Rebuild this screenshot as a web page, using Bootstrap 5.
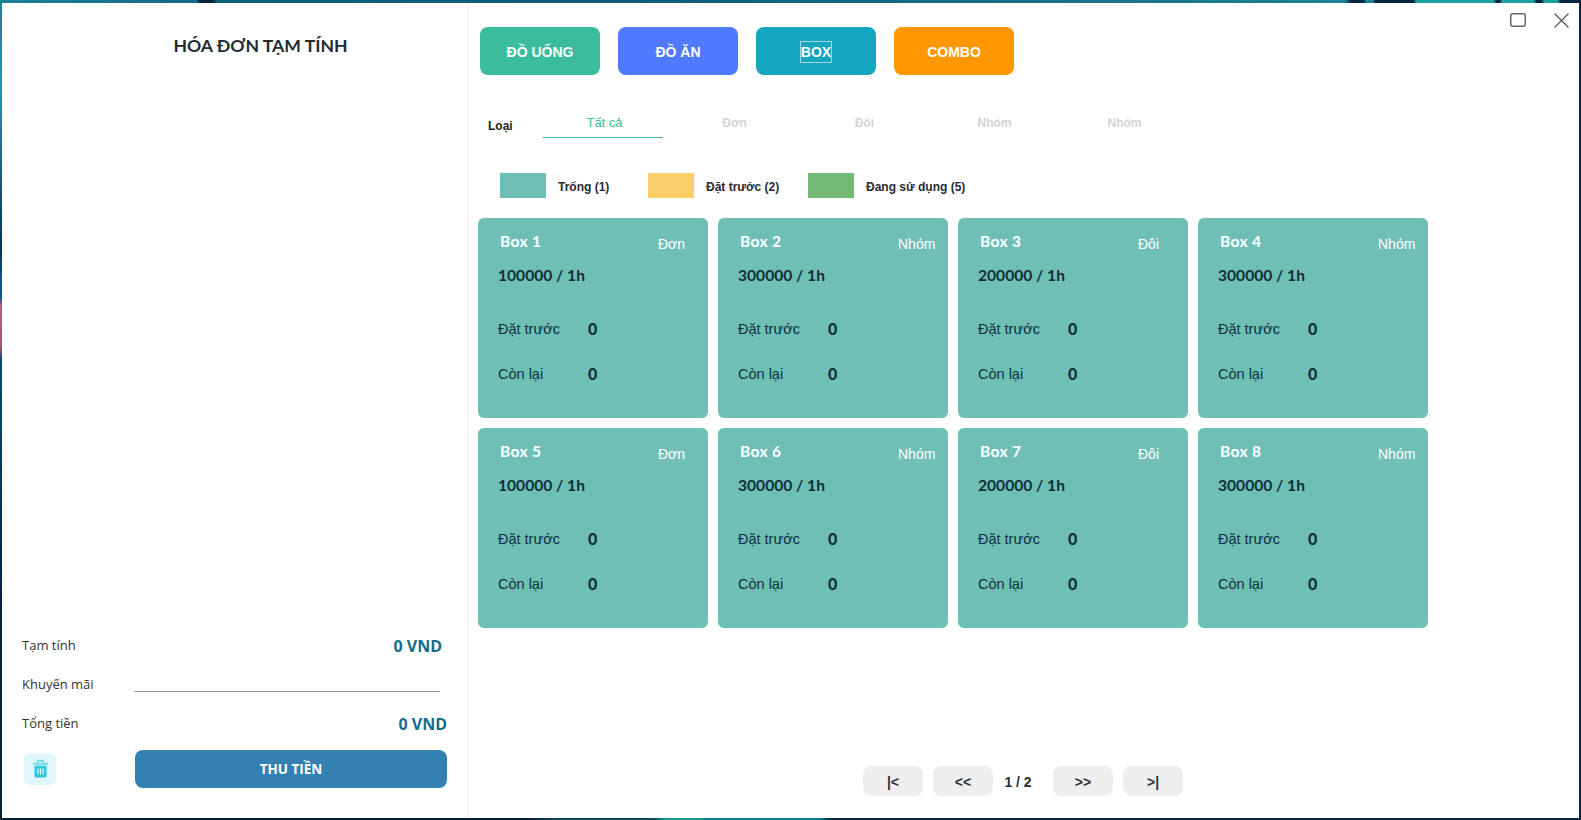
<!DOCTYPE html>
<html lang="vi">
<head>
  <meta charset="UTF-8" />
  <title>Hóa đơn tạm tính</title>
  <link href="https://cdn.jsdelivr.net/npm/bootstrap@5.3.0/dist/css/bootstrap.min.css" rel="stylesheet">
  <style>
    html, body { height: 100%; overflow: hidden; }
    body {
      background:
        linear-gradient(90deg, #1d8197 0, #14698a 197px, #06263f 199px, #06263f 214px, #0f6079 216px, #0f5a75 600px, #1d8197 1345px, #06263f 1351px, #06263f 1364px, #1d8197 1366px, #1d8197 1373px, #06263f 1375px, #06263f 1414px, #1fa0a4 1416px, #1fa0a4 1494px, #06263f 1496px, #06263f 1500px, #1fa0a4 1502px, #1fa0a4 1534px, #06263f 1536px, #06263f 1542px, #1fa0a4 1544px, #1fa0a4 1558px, #06263f 1560px) top / 100% 3px no-repeat,
        linear-gradient(90deg, #07203a 0, #07203a 530px, #0e4a5c 560px, #0e4a5c 655px, #1c9a94 665px, #1c9a94 700px, #12789a 705px, #12789a 820px, #06263f 830px) bottom / 100% 2px no-repeat,
        linear-gradient(180deg, #1d8197 0, #1a9ab0 90px, #0a3050 250px, #0a5a85 280px, #0a5a85 298px, #b85c7c 305px, #b05878 345px, #0a4a6a 360px, #07203a 620px) left / 2px 100% no-repeat,
        #06263f;
      padding: 3px 2px 2px 2px;
      font-family: "Open Sans", sans-serif;
    }
    .app-window { height: 815px; position: relative; background: #fff; }

    /* left side */
    .bill-panel { width: 466px; border-right: 1px solid #eceef0; }
    .bill-title { font: 700 17.6px/1 Lato, sans-serif; color: #222b33; padding: 34px 0 0 52px; }
    .bill-foot { padding: 0 20px 30px 20px; font-size: 13px; color: #333; }
    .sum-row { height: 39px; }
    .sum-value { font-size: 16px; font-weight: 700; color: #136d8c; }
    .sum-row:first-child .sum-value { margin-right: 5px; }
    .promo-line { width: 306px; height: 14px; border-bottom: 1px solid #999; margin-right: 7px; }
    .trash-tile { width: 32px; height: 32px; background: #e0f7fb; border-radius: 6px; margin-left: 2px; }
    .btn-pay { width: 312px; height: 38px; background: #3480b3; color: #fff; font-size: 13.5px; font-weight: 700; border-radius: 8px; border: 0; padding-top: 2px; }

    /* right side */
    .main-panel { padding: 24px 0 0 10px; }
    .cat-row { gap: 18px; margin-left: 2px; }
    .cat-btn { width: 120px; height: 48px; border: 0; border-radius: 8px; color: #fff; font: 700 14px "Liberation Sans", sans-serif; padding-top: 3px; }
    .cat-drink { background: #3bbd9c; }
    .cat-food { background: #4f79ff; }
    .cat-box { background: #14a6bf; }
    .cat-combo { background: #ff9800; }
    .focus-box { outline: 1px solid #a5d5df; padding: 2px 0; }

    .type-row { margin-top: 31px; font: 700 12px "Liberation Sans", sans-serif; }
    .type-label { width: 65px; padding-left: 10px; padding-top: 13px; color: #222; }
    .type-tab { width: 120px; height: 32px; margin-right: 10px; text-align: center; color: #d2d4d6; padding: 10px 0 0 3px; border-bottom: 1px solid transparent; }
    .type-tab.is-on { color: #3bbd9c; border-bottom-color: #3bbd9c; font-weight: 400; font-size: 13px; padding-top: 9px; }

    .legend-row { margin-top: 35px; margin-bottom: 20px; padding-left: 22px; font: 700 12px "Liberation Sans", sans-serif; color: #2a2a33; height: 25px; }
    .legend-row span { padding-top: 2px; }
    .legend-swatch { width: 46px; height: 25px; margin-right: 12px; }

    .box-grid { display: grid; grid-template-columns: repeat(4, 230px); gap: 10px; }
    .box-card { height: 200px; border-radius: 6px; background: #6fbfb7; color: #0f3038; font-family: Lato, sans-serif; padding: 12px 0 0 20px; }
    .box-head { height: 24px; color: #fff; }
    .box-name { width: 160px; padding-left: 2px; font-size: 15.5px; font-weight: 700; letter-spacing: .4px; }
    .box-type { font: 400 14px "Liberation Sans", sans-serif; padding-top: 6px; }
    .box-price { font-size: 15.6px; font-weight: 700; margin-top: 10px; height: 42px; }
    .box-stat { height: 45px; font: 400 14.5px "Liberation Sans", sans-serif; }
    .box-stat span:first-child { width: 90px; }
    .box-stat b { font: 900 16px Lato, sans-serif; }

    .pager { position: absolute; left: 861px; top: 763px; font: 700 14px "Liberation Sans", sans-serif; color: #2b2f36; }
    .page-btn { width: 60px; height: 30px; background: #eee; border: 0; border-radius: 8px; color: #2b2f36; font-weight: 700; padding: 2px 0 0; }
    .page-num { width: 60px; text-align: center; padding: 2px 10px 0 0; }

    .win-btns { position: absolute; right: 10px; top: 10px; gap: 28px; }
  </style>
</head>
<body>

  <div class="app-window d-flex">

    <div class="bill-panel d-flex flex-column justify-content-between">
      <div class="bill-title text-center">HÓA ĐƠN TẠM TÍNH</div>

      <div class="bill-foot">
        <div class="sum-row d-flex justify-content-between align-items-center">
          <span>Tạm tính</span><span class="sum-value">0 VND</span>
        </div>
        <div class="sum-row d-flex align-items-center">
          <span>Khuyến mãi</span><div class="promo-line ms-auto"></div>
        </div>
        <div class="sum-row d-flex justify-content-between align-items-center">
          <span>Tổng tiền</span><span class="sum-value">0 VND</span>
        </div>
        <div class="d-flex justify-content-between align-items-center" style="margin-top:7px">
          <div class="trash-tile d-flex align-items-center justify-content-center">
            <svg width="15" height="18" viewBox="0 0 15 18">
              <rect x="4.5" y=".6" width="6" height="3" rx="1" fill="none" stroke="#5cd3e3" stroke-width="1.1"/>
              <rect x="0" y="2.5" width="15" height="3" rx="1" fill="#7fdde9"/>
              <path d="M1.5 6h12v10a1.5 1.5 0 0 1-1.5 1.5H3A1.5 1.5 0 0 1 1.5 16z" fill="#2bc8dc"/>
              <path d="M5 8.5v6M7.5 8.5v6M10 8.5v6" stroke="#e0f7fb" stroke-width="1.2"/>
            </svg>
          </div>
          <button class="btn-pay">THU TIỀN</button>
        </div>
      </div>
    </div>

    <div class="main-panel flex-grow-1">
      <div class="cat-row d-flex">
        <button class="cat-btn cat-drink">ĐỒ UỐNG</button>
        <button class="cat-btn cat-food">ĐỒ ĂN</button>
        <button class="cat-btn cat-box"><span class="focus-box">BOX</span></button>
        <button class="cat-btn cat-combo">COMBO</button>
      </div>

      <div class="type-row d-flex">
        <div class="type-label">Loại</div>
        <div class="type-tab is-on">Tất cả</div>
        <div class="type-tab">Đơn</div>
        <div class="type-tab">Đôi</div>
        <div class="type-tab">Nhóm</div>
        <div class="type-tab">Nhóm</div>
      </div>

      <div class="legend-row d-flex align-items-center">
        <div class="legend-swatch" style="background:#6fbfb7"></div><span style="width:90px">Trống (1)</span>
        <div class="legend-swatch" style="background:#fbd06a"></div><span style="width:102px">Đặt trước (2)</span>
        <div class="legend-swatch" style="background:#75b977"></div><span>Đang sử dụng (5)</span>
      </div>

      <div class="box-grid" id="boxes"></div>
    </div>

    <div class="pager d-flex align-items-center gap-0">
      <button class="page-btn">|&lt;</button>
      <span style="width:10px"></span>
      <button class="page-btn">&lt;&lt;</button>
      <span class="page-num">1 / 2</span>
      <button class="page-btn">&gt;&gt;</button>
      <span style="width:10px"></span>
      <button class="page-btn">&gt;|</button>
    </div>

    <div class="win-btns d-flex">
      <svg width="16" height="14" viewBox="0 0 16 14"><rect x=".75" y=".75" width="14.5" height="12.5" rx="2" fill="none" stroke="#666" stroke-width="1.5"/></svg>
      <svg width="15" height="15" viewBox="0 0 15 15"><path d="M.5.5l14 14M14.5.5l-14 14" stroke="#555" stroke-width="1.2" fill="none"/></svg>
    </div>
  </div>

  <script>
    const BOXES = [
      ["Box 1", "Đơn", 100000], ["Box 2", "Nhóm", 300000], ["Box 3", "Đôi", 200000], ["Box 4", "Nhóm", 300000],
      ["Box 5", "Đơn", 100000], ["Box 6", "Nhóm", 300000], ["Box 7", "Đôi", 200000], ["Box 8", "Nhóm", 300000]
    ];
    document.getElementById("boxes").innerHTML = BOXES.map(([name, type, price]) => `
      <div class="box-card">
        <div class="box-head d-flex"><span class="box-name">${name}</span><span class="box-type">${type}</span></div>
        <div class="box-price">${price} / 1h</div>
        <div class="box-stat d-flex align-items-center"><span>Đặt trước</span><b>0</b></div>
        <div class="box-stat d-flex align-items-center"><span>Còn lại</span><b>0</b></div>
      </div>`).join("");
  </script>
  <script src="https://cdn.jsdelivr.net/npm/bootstrap@5.3.0/dist/js/bootstrap.bundle.min.js"></script>
</body>
</html>
